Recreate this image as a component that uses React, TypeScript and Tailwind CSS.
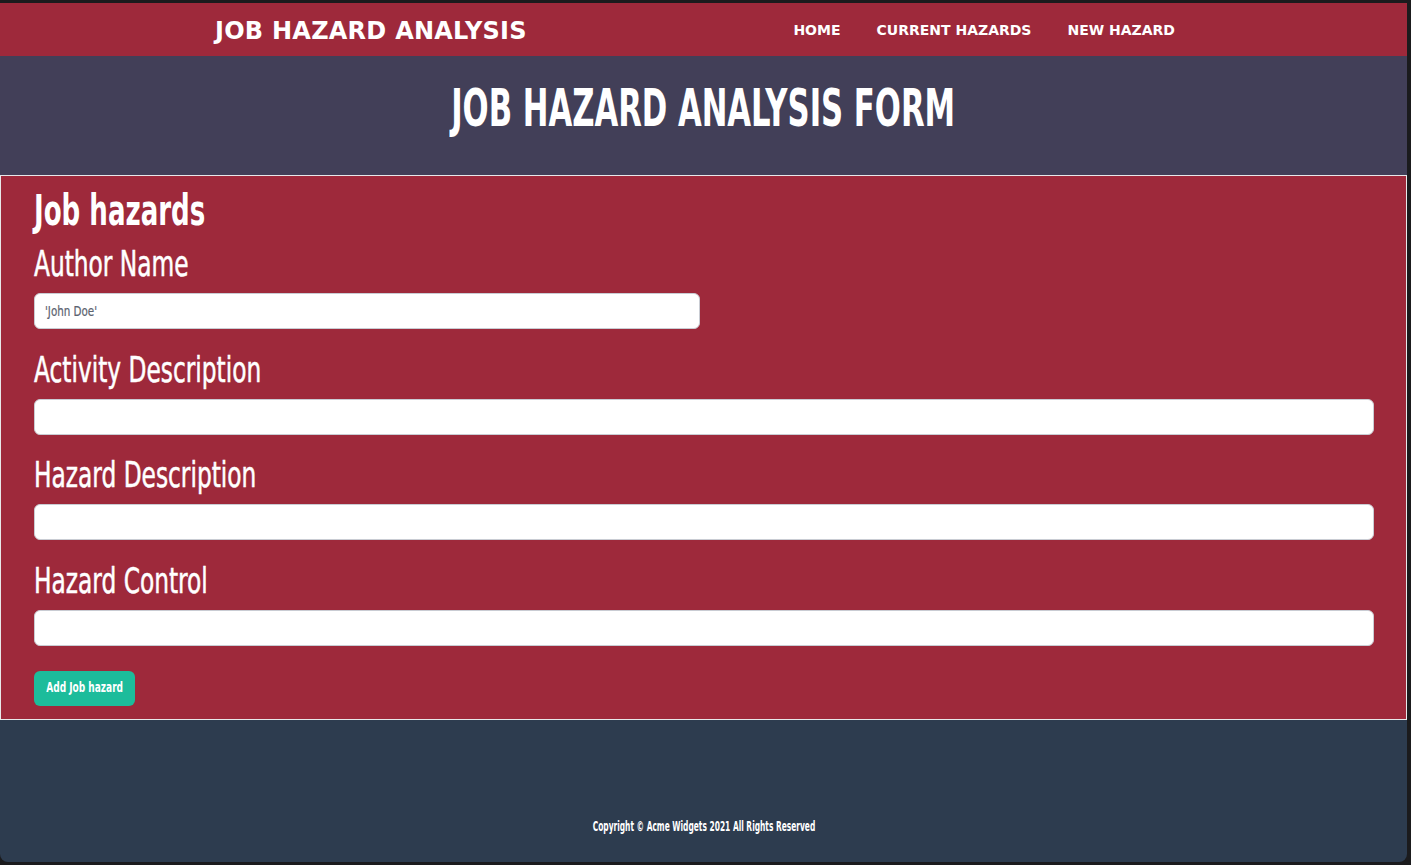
import React from "react";

const cond = { fontFamily: '"DejaVu Sans Condensed", "DejaVu Sans", "Liberation Sans", sans-serif' };
const wide = { fontFamily: '"DejaVu Sans", "Liberation Sans", sans-serif' };

function Field({ label, value, narrow }: { label: string; value?: string; narrow?: boolean }) {
  return (
    <div className="flex flex-col">
      <label className="block text-white text-[35px] leading-[40px] h-[40px] whitespace-nowrap">
        <span className="inline-block align-top origin-left scale-x-[0.74] [-webkit-text-stroke:0.5px_white]" style={cond}>{label}</span>
      </label>
      <div className={`mt-[9px] h-[36px] rounded-[6px] border border-[#c9ccd3] bg-white flex items-center px-[10px] ${narrow ? "w-[666px]" : "w-full"}`}>
        <span className="inline-block origin-left scale-x-[0.82] text-[#5c6370] text-[14px] whitespace-nowrap [-webkit-text-stroke:0.2px_#5c6370]" style={cond}>{value}</span>
      </div>
    </div>
  );
}

export default function App() {
  return (
    <div className="w-[1411px] h-[865px] bg-[#1b1b1d] pt-[3px] overflow-hidden">
      <div className="w-[1407px] h-[859px] rounded-b-[8px] overflow-hidden flex flex-col bg-[#2d3c4f]">
        <nav className="h-[53px] bg-[#9e293b] flex items-center pl-[215px] pr-[232px] pt-[2px]">
          <div className="text-white font-bold text-[24px] tracking-[0.25px]" style={wide}>
            JOB HAZARD ANALYSIS
          </div>
          <div className="ml-auto flex items-center gap-[36px] text-white font-bold text-[14px]" style={wide}>
            <span>HOME</span>
            <span>CURRENT HAZARDS</span>
            <span>NEW HAZARD</span>
          </div>
        </nav>
        <header className="h-[119px] bg-[#423f58] flex items-center justify-center pb-[17px]">
          <h1 className="text-white font-bold text-[52px] leading-none whitespace-nowrap">
            <span className="inline-block origin-center scale-x-[0.656]" style={cond}>JOB HAZARD ANALYSIS FORM</span>
          </h1>
        </header>
        <section className="h-[545px] bg-[#9e293b] border border-[#e8e8ea] pl-[33px] pr-[32px] pt-[12px]">
          <h2 className="block text-white font-bold text-[42px] leading-[46px] h-[46px] whitespace-nowrap">
            <span className="inline-block align-top origin-left scale-x-[0.69]" style={cond}>Job hazards</span>
          </h2>
          <div className="flex flex-col gap-[20.5px] mt-[10px]">
            <Field label="Author Name" value="'John Doe'" narrow />
            <Field label="Activity Description" />
            <Field label="Hazard Description" />
            <Field label="Hazard Control" />
          </div>
          <button className="mt-[25px] h-[35px] w-[101px] rounded-[6px] bg-[#1cbc9b] text-white font-bold text-[14.5px] flex items-center justify-center overflow-visible whitespace-nowrap">
            <span className="inline-block origin-center scale-x-[0.69]" style={cond}>Add Job hazard</span>
          </button>
        </section>
        <footer className="flex-1 flex items-end justify-center pb-[26px]">
          <span className="inline-block origin-center scale-x-[0.615] text-white text-[13.5px] font-bold whitespace-nowrap" style={cond}>
            Copyright © Acme Widgets 2021 All Rights Reserved
          </span>
        </footer>
      </div>
    </div>
  );
}
